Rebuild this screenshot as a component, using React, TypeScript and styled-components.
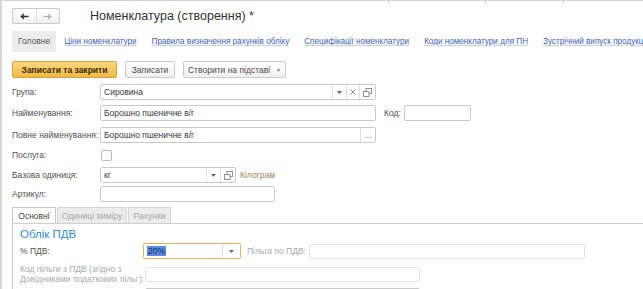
import * as React from "react";
import styled, { createGlobalStyle } from "styled-components";

const GlobalStyle = createGlobalStyle`
  html, body {
    margin: 0;
    padding: 0;
    background: #fff;
    overflow: hidden;
  }
  body {
    font-family: "Liberation Sans", Arial, sans-serif;
    font-size: 8.5px;
    color: #4d4d4d;
  }
`;

const Frame = styled.div`
  position: relative;
  width: 643px;
  height: 289px;
  box-sizing: border-box;
  border-top: 1px solid #d4d4d4;
  border-left: 2px solid #d6d6d6;
  overflow: hidden;
`;

const Tick = styled.span<{ $x: number }>`
  position: absolute;
  top: -1px;
  left: ${(p) => p.$x}px;
  width: 1px;
  height: 3px;
  background: #bdbdbd;
`;

const Header = styled.div`
  display: flex;
  align-items: center;
  height: 16px;
  margin-top: 7px;
  padding-left: 10px;
`;

const NavBox = styled.div`
  display: flex;
  width: 48px;
  height: 16px;
  box-sizing: border-box;
  border: 1px solid #c9c9c9;
  border-radius: 2px;
  background: linear-gradient(#ffffff, #f1f1f1);
`;

const NavHalf = styled.div<{ $divider?: boolean }>`
  flex: 1;
  display: flex;
  align-items: center;
  justify-content: center;
  border-left: ${(p) => (p.$divider ? "1px solid #dcdcdc" : "none")};
`;

const Title = styled.div`
  margin-left: 30px;
  font-size: 12.5px;
  color: #333;
`;

const SectionTabs = styled.div`
  display: flex;
  align-items: center;
  height: 21px;
  margin-top: 7px;
  padding-left: 10px;
  overflow: hidden;
`;

const SectionTab = styled.div<{ $active?: boolean }>`
  flex: none;
  height: 21px;
  line-height: 21px;
  padding: 0 ${(p) => (p.$active ? "6px" : "7px")};
  margin-right: 1px;
  font-size: ${(p) => (p.$active ? "8.5px" : "8.15px")};
  background: ${(p) => (p.$active ? "#ececec" : "transparent")};
  color: ${(p) => (p.$active ? "#555" : "#3b5fbf")};
  text-decoration: ${(p) => (p.$active ? "none" : "underline")};
  text-decoration-color: rgba(59, 95, 191, 0.3);
  white-space: nowrap;
`;

const Toolbar = styled.div`
  display: flex;
  align-items: center;
  gap: 8px;
  height: 17px;
  margin-top: 9px;
  padding-left: 10px;
`;

const Button = styled.div<{ $primary?: boolean; $w: number }>`
  display: flex;
  align-items: center;
  justify-content: center;
  gap: 6px;
  width: ${(p) => p.$w}px;
  height: 17px;
  box-sizing: border-box;
  border: 1px solid ${(p) => (p.$primary ? "#d9a232" : "#cbcbcb")};
  border-radius: 2px;
  background: ${(p) =>
    p.$primary
      ? "linear-gradient(#fad783, #f1b944)"
      : "linear-gradient(#ffffff, #f0f0f0)"};
  color: ${(p) => (p.$primary ? "#3a2a00" : "#4d4d4d")};
  font-weight: ${(p) => (p.$primary ? "bold" : "normal")};
  white-space: nowrap;
`;

const Caret = styled.span`
  font-size: 5px;
  color: #777;
`;

const Form = styled.div`
  margin-top: 6px;
  padding-left: 10px;
`;

const Row = styled.div<{ $mt: number }>`
  display: flex;
  align-items: center;
  height: 16px;
  margin-top: ${(p) => p.$mt}px;
`;

const Label = styled.div<{ $w: number; $muted?: boolean }>`
  width: ${(p) => p.$w}px;
  flex: none;
  color: ${(p) => (p.$muted ? "#aaa" : "#505050")};
  white-space: nowrap;
`;

const Field = styled.div<{ $w: number; $h?: number; $focus?: boolean; $disabled?: boolean }>`
  display: flex;
  align-items: stretch;
  width: ${(p) => p.$w}px;
  height: ${(p) => p.$h ?? 16}px;
  box-sizing: border-box;
  border: 1px solid
    ${(p) => (p.$focus ? "#f0b050" : p.$disabled ? "#e3e3e3" : "#cacaca")};
  border-radius: 2px;
  background: #fff;
  flex: none;
`;

const FieldText = styled.div`
  flex: 1;
  display: flex;
  align-items: center;
  padding-left: 3px;
  color: #3a3a3a;
  white-space: nowrap;
  overflow: hidden;
`;

const Selected = styled.span`
  background: #5a8de0;
  color: #102a70;
  padding: 0 1px;
`;

const FieldButton = styled.div<{ $w: number }>`
  width: ${(p) => p.$w}px;
  flex: none;
  display: flex;
  align-items: center;
  justify-content: center;
  border-left: 1px solid #e0e0e0;
  color: #777;
`;

const Checkbox = styled.div`
  width: 11px;
  height: 11px;
  box-sizing: border-box;
  border: 1px solid #bcbcbc;
  border-radius: 2px;
  background: #fff;
`;

const SideLabel = styled.div<{ $ml: number; $color?: string }>`
  margin-left: ${(p) => p.$ml}px;
  margin-right: 3px;
  color: ${(p) => p.$color ?? "#505050"};
  white-space: nowrap;
`;

const InnerTabs = styled.div`
  display: flex;
  align-items: flex-end;
  height: 16px;
  margin-top: 5px;
  margin-left: 10px;
`;

const InnerTab = styled.div<{ $active?: boolean; $w: number }>`
  width: ${(p) => p.$w}px;
  height: 16px;
  box-sizing: border-box;
  display: flex;
  align-items: center;
  justify-content: center;
  margin-right: 1px;
  border: 1px solid ${(p) => (p.$active ? "#c8c8c8" : "#d6d6d6")};
  border-bottom: none;
  background: ${(p) => (p.$active ? "#fff" : "#ececec")};
  color: ${(p) => (p.$active ? "#444" : "#a8a8a8")};
  white-space: nowrap;
`;

const Panel = styled.div`
  margin-left: 10px;
  border-top: 1px solid #cfcfcf;
  border-left: 1px solid #cfcfcf;
  padding-left: 7px;
  height: 80px;
`;

const Heading = styled.div`
  margin-top: 3px;
  height: 14px;
  line-height: 14px;
  font-size: 11.5px;
  color: #2b8dd6;
`;

const TwoLineLabel = styled.div<{ $w: number }>`
  width: ${(p) => p.$w}px;
  flex: none;
  color: #aaa;
  line-height: 10px;
`;

const PanelRow = styled.div<{ $mt: number; $h?: number }>`
  display: flex;
  align-items: center;
  height: ${(p) => p.$h ?? 16}px;
  margin-top: ${(p) => p.$mt}px;
`;

const ArrowLeft = () => (
  <svg width="9" height="7" viewBox="0 0 9 7">
    <path d="M8.5 3.5H1.5M4 1L1.2 3.5L4 6" stroke="#333" strokeWidth="1.3" fill="none" />
  </svg>
);

const ArrowRight = () => (
  <svg width="9" height="7" viewBox="0 0 9 7">
    <path d="M0.5 3.5H7.5M5 1L7.8 3.5L5 6" stroke="#aaa" strokeWidth="1.1" fill="none" />
  </svg>
);

const DropArrow = () => (
  <svg width="5" height="3" viewBox="0 0 5 3">
    <path d="M0 0H5L2.5 3Z" fill="#666" />
  </svg>
);

const ClearIcon = () => (
  <svg width="6" height="6" viewBox="0 0 6 6">
    <path d="M0.5 0.5L5.5 5.5M5.5 0.5L0.5 5.5" stroke="#888" strokeWidth="1" />
  </svg>
);

const OpenIcon = () => (
  <svg width="9" height="9" viewBox="0 0 9 9">
    <rect x="3" y="0.5" width="5.5" height="5" fill="#fff" stroke="#888" strokeWidth="0.9" />
    <rect x="0.5" y="3.5" width="5.5" height="5" fill="#fff" stroke="#888" strokeWidth="0.9" />
  </svg>
);

const links = [
  "Ціни номенклатури",
  "Правила визначення рахунків обліку",
  "Специфікації номенклатури",
  "Коди номенклатури для ПН",
  "Зустрічний випуск продукції",
];

const App = () => (
  <>
    <GlobalStyle />
    <Frame>
      <Tick $x={386} />
      <Tick $x={483} />
      <Tick $x={561} />

      <Header>
        <NavBox>
          <NavHalf>
            <ArrowLeft />
          </NavHalf>
          <NavHalf $divider>
            <ArrowRight />
          </NavHalf>
        </NavBox>
        <Title>Номенклатура (створення) *</Title>
      </Header>

      <SectionTabs>
        <SectionTab $active>Головне</SectionTab>
        {links.map((l) => (
          <SectionTab key={l}>{l}</SectionTab>
        ))}
      </SectionTabs>

      <Toolbar>
        <Button $primary $w={105}>
          Записати та закрити
        </Button>
        <Button $w={50}>Записати</Button>
        <Button $w={103}>
          Створити на підставі <Caret>▼</Caret>
        </Button>
      </Toolbar>

      <Form>
        <Row $mt={0}>
          <Label $w={88}>Група:</Label>
          <Field $w={276}>
            <FieldText>Сировина</FieldText>
            <FieldButton $w={13}>
              <DropArrow />
            </FieldButton>
            <FieldButton $w={12}>
              <ClearIcon />
            </FieldButton>
            <FieldButton $w={15}>
              <OpenIcon />
            </FieldButton>
          </Field>
        </Row>
        <Row $mt={5}>
          <Label $w={88}>Найменування:</Label>
          <Field $w={276}>
            <FieldText>Борошно пшеничне в/г</FieldText>
          </Field>
          <SideLabel $ml={8}>Код:</SideLabel>
          <Field $w={67} />
        </Row>
        <Row $mt={6}>
          <Label $w={88}>Повне найменування:</Label>
          <Field $w={276}>
            <FieldText>Борошно пшеничне в/г</FieldText>
            <FieldButton $w={14}>...</FieldButton>
          </Field>
        </Row>
        <Row $mt={4}>
          <Label $w={89}>Послуга:</Label>
          <Checkbox />
        </Row>
        <Row $mt={4}>
          <Label $w={88}>Базова одиниця:</Label>
          <Field $w={136}>
            <FieldText>кг</FieldText>
            <FieldButton $w={13}>
              <DropArrow />
            </FieldButton>
            <FieldButton $w={14}>
              <OpenIcon />
            </FieldButton>
          </Field>
          <SideLabel $ml={4} $color="#a3854f">
            Кілограм
          </SideLabel>
        </Row>
        <Row $mt={3}>
          <Label $w={88}>Артикул:</Label>
          <Field $w={175} />
        </Row>
      </Form>

      <InnerTabs>
        <InnerTab $active $w={44}>
          Основні
        </InnerTab>
        <InnerTab $w={70}>Одиниці виміру</InnerTab>
        <InnerTab $w={43}>Рахунки</InnerTab>
      </InnerTabs>

      <Panel>
        <Heading>Облік ПДВ</Heading>
        <PanelRow $mt={2}>
          <Label $w={123}>% ПДВ:</Label>
          <Field $w={98} $focus>
            <FieldText>
              <Selected>20%</Selected>
            </FieldText>
            <FieldButton $w={17}>
              <DropArrow />
            </FieldButton>
          </Field>
          <SideLabel $ml={6} $color="#aaa">
            Пільга по ПДВ:
          </SideLabel>
          <Field $w={276} $h={15} $disabled />
        </PanelRow>
        <PanelRow $mt={5} $h={20}>
          <TwoLineLabel $w={125}>
            Код пільги з ПДВ (згідно з
            <br />
            Довідниками податкових пільг):
          </TwoLineLabel>
          <Field $w={275} $h={15} $disabled />
        </PanelRow>
        <PanelRow $mt={3}>
          <TwoLineLabel $w={125} />
          <Field $w={275} $h={15} />
        </PanelRow>
      </Panel>
    </Frame>
  </>
);

export default App;
